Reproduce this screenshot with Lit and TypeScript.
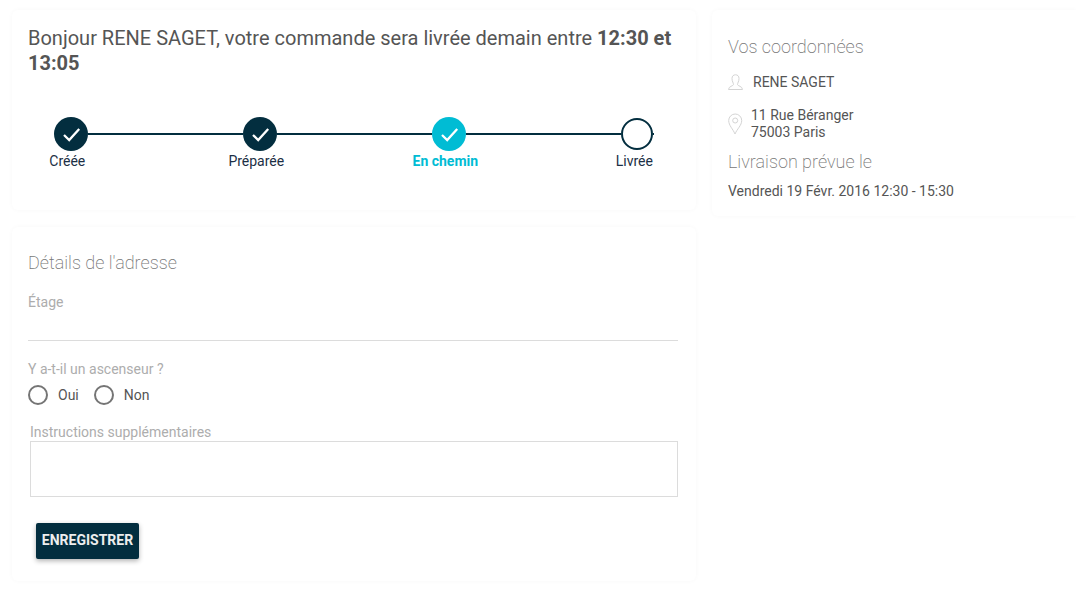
import { LitElement, html, css, svg } from "lit";
import { customElement } from "lit/decorators.js";

const check = svg`<svg class="check" width="20" height="20" viewBox="0 0 20 20"><path d="M3 11 L8.2 16 L18.2 5" fill="none" stroke="#fff" stroke-width="2.3"/></svg>`;

@customElement("app-root")
export class AppRoot extends LitElement {
  static styles = css`
    :host { display: block; font-family: Roboto, sans-serif; background: #fff; height: 590px; overflow: hidden; color: #555; }
    .page { display: flex; align-items: flex-start; gap: 16px; padding: 10px 0 0 12px; }
    .left { width: 684px; display: flex; flex-direction: column; gap: 17px; flex: none; }
    .right { flex: 1; min-width: 0; margin-right: -4px; }
    .card { background: #fff; border-radius: 6px; box-shadow: 0 0 5px rgba(0,0,0,.03); box-sizing: border-box; }
    .status { height: 200px; padding: 16px 16px 0; }
    h1 { margin: 0; font-size: 20px; line-height: 24.5px; font-weight: 400; color: #555; }
    h1 b { font-weight: 700; }
    .steps { display: flex; margin: 42px 0 0 26px; }
    .step { width: 189px; flex: none; }
    .step.last { width: 60px; }
    .track { display: flex; align-items: center; height: 34px; }
    .dot { width: 34px; height: 34px; border-radius: 50%; background: #032e3f; display: flex; align-items: center; justify-content: center; flex: none; box-sizing: border-box; }
    .dot.active { background: #00bcd4; }
    .dot.todo { width: 32px; height: 32px; background: #fff; border: 2px solid #032e3f; }
    .bar { flex: 1; height: 2px; background: #032e3f; }
    .stub { flex: none; width: 1px; height: 2px; background: #032e3f; }
    .label { width: 26.6px; display: flex; justify-content: center; white-space: nowrap; font-size: 14px; line-height: 20px; color: #1c2f45; }
    .label.active { color: #00bcd4; font-weight: 700; }
    h2 { margin: 0; font-size: 18px; line-height: 24px; font-weight: 200; color: #777; }
    .info { height: 206px; padding: 25px 16px 0; font-size: 14px; color: #555; }
    .who { display: flex; align-items: center; gap: 10px; margin-top: 13px; height: 20px; }
    .where { display: flex; align-items: center; gap: 8px; margin-top: 15px; line-height: 17px; }
    .info h2.next { margin-top: 9px; }
    .when { margin-top: 7px; line-height: 20px; }
    .form { height: 354px; padding: 24px 18px 0 16px; font-size: 14px; }
    .hint { color: #adadad; line-height: 20px; }
    .etage { margin-top: 17px; }
    .rule { height: 1px; background: #dcdcdc; margin-top: 28px; }
    .lift { margin-top: 18px; }
    .radios { display: flex; align-items: center; margin-top: 6px; height: 20px; }
    .radio { width: 20px; height: 20px; border: 2px solid #757575; border-radius: 50%; box-sizing: border-box; flex: none; }
    .radios span { margin: 0 15px 0 10px; color: #555; }
    .notes { margin: 18px 0 0 2px; line-height: 18px; }
    .area { margin-left: 2px; height: 56px; border: 1px solid #dcdcdc; box-sizing: border-box; }
    button { display: block; margin: 26px 0 0 8px; width: 103px; height: 36px; padding: 0 0 2px; border: 0; border-radius: 2px; background: #032e3f; color: #eee; font: 700 14px Roboto, sans-serif; box-shadow: 0 2px 5px rgba(0,0,0,.3); }
  `;

  private step(name: string, kind: string, last = false) {
    return html`<div class="step ${last ? "last" : ""}">
      <div class="track">
        <div class="dot ${kind}">${kind === "todo" ? "" : check}</div>
        ${last ? html`<div class="stub"></div>` : html`<div class="bar"></div>`}
      </div>
      <div class="label ${kind === "active" ? "active" : ""}">${name}</div>
    </div>`;
  }

  render() {
    return html`<div class="page">
      <div class="left">
        <section class="card status">
          <h1>Bonjour RENE SAGET, votre commande sera livrée demain entre <b>12:30 et 13:05</b></h1>
          <div class="steps">
            ${this.step("Créée", "done")}
            ${this.step("Préparée", "done")}
            ${this.step("En chemin", "active")}
            ${this.step("Livrée", "todo", true)}
          </div>
        </section>
        <section class="card form">
          <h2>Détails de l'adresse</h2>
          <div class="hint etage">Étage</div>
          <div class="rule"></div>
          <div class="hint lift">Y a-t-il un ascenseur ?</div>
          <div class="radios">
            <div class="radio"></div><span>Oui</span>
            <div class="radio"></div><span>Non</span>
          </div>
          <div class="hint notes">Instructions supplémentaires</div>
          <div class="area"></div>
          <button>ENREGISTRER</button>
        </section>
      </div>
      <aside class="right card info">
        <h2>Vos coordonnées</h2>
        <div class="who">
          <svg width="15" height="16" viewBox="0 0 15 16" fill="none" stroke="#d4d4d4" stroke-width="1"><path d="M5.5 10.5 C5.5 9 4 7.5 4 4.5 C4 2 5.5 .8 7.5 .8 C9.5 .8 11 2 11 4.5 C11 7.5 9.5 9 9.5 10.5 C9.5 12 14.5 12.2 14.5 15.5 L.5 15.5 C.5 12.2 5.5 12 5.5 10.5 Z"/></svg>
          <span>RENE SAGET</span>
        </div>
        <div class="where">
          <svg width="15" height="22" viewBox="0 0 15 22" fill="none" stroke="#d4d4d4" stroke-width="1"><path d="M7 21 C5 16 .7 12.5 .7 7.5 A6.5 6.5 0 0 1 13.7 7.5 C13.7 12.5 9 16 7 21 Z"/><circle cx="7.2" cy="7.5" r="2.5"/></svg>
          <div>11 Rue Béranger<br />75003 Paris</div>
        </div>
        <h2 class="next">Livraison prévue le</h2>
        <div class="when">Vendredi 19 Févr. 2016 12:30 - 15:30</div>
      </aside>
    </div>`;
  }
}
